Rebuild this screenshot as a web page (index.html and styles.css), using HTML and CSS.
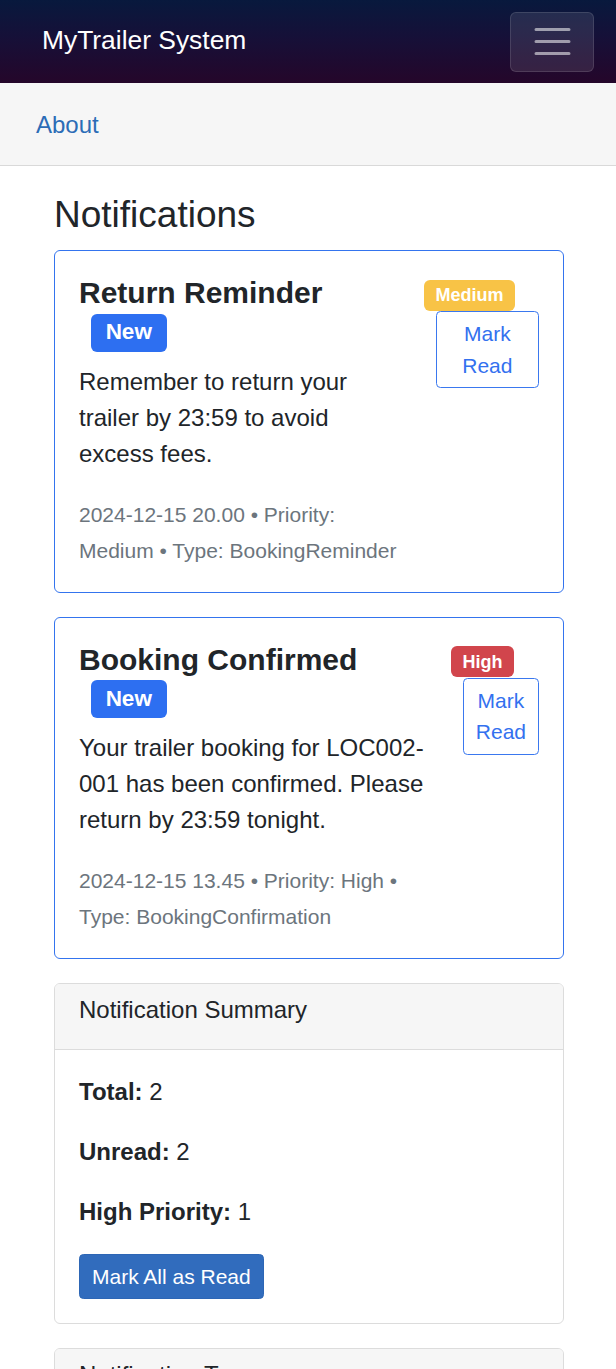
FILE: index.html
```html
<!DOCTYPE html>
<html lang="en">
<head>
<meta charset="utf-8">
<title>Notifications - MyTrailer System</title>
<link rel="stylesheet" href="styles.css">
</head>
<body>
<header class="navbar">
  <a class="navbar-brand" href="#">MyTrailer System</a>
  <button class="navbar-toggler" type="button" aria-label="Toggle navigation">
    <svg class="toggler-icon" viewBox="0 0 30 30" width="45" height="45" aria-hidden="true">
      <path d="M4 7h22M4 15h22M4 23h22" stroke="rgba(255,255,255,0.55)" stroke-width="2" stroke-linecap="round" stroke-miterlimit="10" fill="none"/>
    </svg>
  </button>
</header>
<nav class="subnav">
  <a class="subnav-link" href="#">About</a>
</nav>
<main class="container">
  <h2 class="page-title">Notifications</h2>

  <div class="note-card">
    <div class="note-row">
      <div class="note-main">
        <h5 class="note-title">Return Reminder <span class="badge badge-new">New</span></h5>
        <p class="note-text">Remember to return your trailer by 23:59 to avoid excess fees.</p>
        <p class="note-meta"><small class="muted">2024-12-15 20.00 • Priority: Medium • Type: BookingReminder</small></p>
      </div>
      <div class="note-side">
        <span class="badge badge-medium">Medium</span>
        <button class="btn-outline" type="button">Mark Read</button>
      </div>
    </div>
  </div>

  <div class="note-card">
    <div class="note-row">
      <div class="note-main">
        <h5 class="note-title">Booking Confirmed <span class="badge badge-new">New</span></h5>
        <p class="note-text">Your trailer booking for LOC002-001 has been confirmed. Please return by 23:59 tonight.</p>
        <p class="note-meta"><small class="muted">2024-12-15 13.45 • Priority: High • Type: BookingConfirmation</small></p>
      </div>
      <div class="note-side">
        <span class="badge badge-high">High</span>
        <button class="btn-outline" type="button">Mark Read</button>
      </div>
    </div>
  </div>

  <div class="panel">
    <div class="panel-header"><h5 class="panel-title">Notification Summary</h5></div>
    <div class="panel-body">
      <p class="stat"><strong>Total:</strong> 2</p>
      <p class="stat"><strong>Unread:</strong> 2</p>
      <p class="stat"><strong>High Priority:</strong> 1</p>
      <button class="btn-primary" type="button">Mark All as Read</button>
    </div>
  </div>

  <div class="panel">
    <div class="panel-header"><h5 class="panel-title">Notification Types</h5></div>
    <div class="panel-body">
      <p class="stat"><strong>BookingReminder:</strong> 1</p>
      <p class="stat"><strong>BookingConfirmation:</strong> 1</p>
    </div>
  </div>
</main>
</body>
</html>
```

FILE: styles.css
```css
* { box-sizing: border-box; }

html, body {
  margin: 0;
  padding: 0;
}

body {
  font-family: "Liberation Sans", Arial, sans-serif;
  font-size: 24px;
  line-height: 1.5;
  color: #212529;
  background: #fff;
}

/* top navbar */
.navbar {
  height: 83px;
  display: flex;
  align-items: center;
  justify-content: space-between;
  padding: 0 22px 0 42px;
  background: linear-gradient(180deg, #08193d 0%, #161038 45%, #25062a 100%);
}

.navbar-brand {
  color: #fff;
  text-decoration: none;
  font-size: 26.4px;
  line-height: 1.5;
  padding-bottom: 2px;
}

.navbar-toggler {
  width: 84px;
  height: 60px;
  padding: 6px 18px;
  display: flex;
  align-items: center;
  justify-content: center;
  background: rgba(255, 255, 255, 0.1);
  border: 1px solid rgba(255, 255, 255, 0.12);
  border-radius: 6px;
}

.toggler-icon {
  display: block;
  width: 45px;
  height: 45px;
}

/* secondary bar */
.subnav {
  height: 83px;
  display: flex;
  align-items: center;
  padding: 0 36px 0 36px;
  background: #f6f6f6;
  border-bottom: 1px solid #d9d9d9;
}

.subnav-link {
  color: #2b6cb6;
  text-decoration: none;
  font-size: 24px;
  padding-top: 2px;
}

/* main */
.container {
  padding: 27px 52px 0 54px;
}

.page-title {
  font-size: 37px;
  font-weight: 400;
  line-height: 1.2;
  margin: 0 0 13px;
}

.note-card {
  border: 1px solid #3474ee;
  border-radius: 6px;
  padding: 24px;
  margin-bottom: 24px;
}

.note-row {
  display: flex;
  justify-content: space-between;
  align-items: flex-start;
}

.note-side {
  margin-left: 24px;
}

.note-title {
  font-size: 30px;
  font-weight: 700;
  line-height: 1.2;
  margin: 0 0 12px;
}

.note-text {
  margin: 0 0 24px;
}

.note-meta {
  margin: 0;
}

.muted {
  font-size: 21px;
  color: #6c757d;
}

.badge {
  display: inline-block;
  font-size: 0.75em;
  font-weight: 700;
  line-height: 1;
  padding: 0.35em 0.65em;
  color: #fff;
  border-radius: 6px;
  white-space: nowrap;
  vertical-align: baseline;
}

.badge-new {
  margin-left: 12px;
  background: #2d6ff1;
}

.badge-medium {
  background: #f8c346;
}

.badge-high {
  background: #d1454c;
}

.btn-outline {
  margin-left: 12px;
  font-family: inherit;
  font-size: 21px;
  line-height: 1.5;
  padding: 6px 12px;
  color: #3371ef;
  background: transparent;
  border: 1px solid #3a78ef;
  border-radius: 4.5px;
  text-align: center;
  vertical-align: middle;
}

/* summary panels */
.panel {
  border: 1px solid #dcdcdc;
  border-radius: 6px;
  margin-bottom: 24px;
  overflow: hidden;
}

.panel-header {
  background: #f6f6f6;
  padding: 12px 24px;
  border-bottom: 1px solid #dcdcdc;
}

.panel-title {
  font-size: 24px;
  font-weight: 400;
  line-height: 1.2;
  margin: 0 0 12px;
}

.panel-body {
  padding: 24px;
}

.stat {
  margin: 0 0 24px;
}

.stat strong {
  font-weight: 700;
}

.btn-primary {
  font-family: inherit;
  font-size: 21px;
  line-height: 1.5;
  padding: 6px 12px;
  color: #fff;
  background: #316cbd;
  border: 1px solid #2d66b5;
  border-radius: 4.5px;
}
```
